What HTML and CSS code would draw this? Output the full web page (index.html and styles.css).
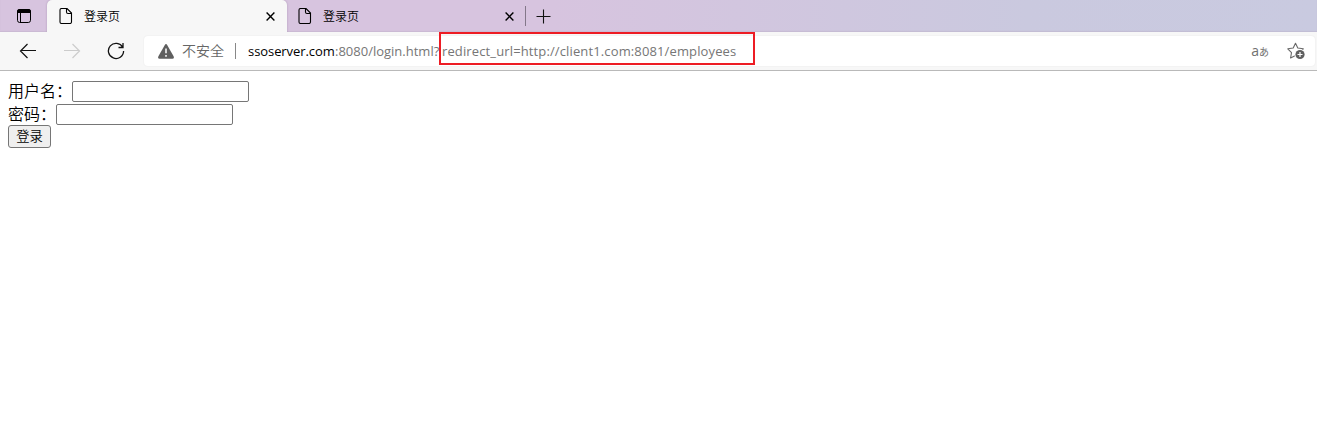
FILE: index.html
```html
<!DOCTYPE html>
<html lang="zh-CN">
<head>
<meta charset="utf-8">
<title>登录页</title>
<link rel="stylesheet" href="styles.css">
</head>
<body>
<header class="browser">
  <div class="tabstrip">
    <div class="tab-actions">
      <svg width="16" height="16" viewBox="0 0 16 16"><rect x="1.500" y="1.500" width="13" height="13" rx="2.200" fill="none" stroke="#000"/><path d="M1 5V3.500Q1 1 3.500 1H12.500Q15 1 15 3.500V5Z"/><path d="M4.500 5V14.500" stroke="#000"/></svg>
    </div>
    <div class="tab active">
      <svg class="page-icon" width="14" height="16" viewBox="0 0 14 16"><path d="M2.500.500H8L12.500 5V14Q12.500 15.500 11 15.500H2.500Q1 15.500 1 14V2Q1 .500 2.500.500ZM7.500.500V4Q7.500 5.500 9 5.500H12.500"/></svg>
      <span class="tab-title">登录页</span>
      <svg class="close" width="9" height="9" viewBox="0 0 9 9"><path d="M.6.6 8.400 8.400M8.400.6.6 8.400"/></svg>
    </div>
    <div class="tab">
      <svg class="page-icon" width="14" height="16" viewBox="0 0 14 16"><path d="M2.500.500H8L12.500 5V14Q12.500 15.500 11 15.500H2.500Q1 15.500 1 14V2Q1 .500 2.500.500ZM7.500.500V4Q7.500 5.500 9 5.500H12.500"/></svg>
      <span class="tab-title">登录页</span>
      <svg class="close" width="9" height="9" viewBox="0 0 9 9"><path d="M.6.6 8.400 8.400M8.400.6.6 8.400"/></svg>
    </div>
    <span class="tab-divider"></span>
    <svg class="new-tab" width="15" height="15" viewBox="0 0 15 15"><path d="M7.500.500V14.500M.500 7.500H14.500"/></svg>
  </div>
  <div class="toolbar">
    <svg class="nav" width="18" height="16" viewBox="0 0 18 16"><path d="M8.500 1 1.500 8 8.500 15M1.500 7.500H17"/></svg>
    <svg class="nav forward" width="18" height="16" viewBox="0 0 18 16"><path d="M9.500 1 16.500 8 9.500 15M16.500 7.500H1"/></svg>
    <svg class="nav reload" width="18" height="18" viewBox="0 0 18 18"><path d="M15.700 5.300A7.600 7.600 0 1 0 16.600 9M16 1V5.500H11.500"/></svg>
    <div class="address">
      <svg class="warn" width="16" height="15" viewBox="0 0 16 15"><path d="M6.800.9Q8-.7 9.200.9L15.700 12.500Q16.300 14.500 14.500 14.800H1.500Q-.3 14.500.3 12.500Z" fill="#5f5f5f"/><path d="M8 4.500V9.200M8 11V12.700" stroke="#fff" stroke-width="1.500"/></svg>
      <span class="insecure">不安全</span>
      <span class="address-divider"></span>
      <span class="url"><span class="host">ssoserver.com</span><span class="path">:8080/login.html?</span><span class="query">redirect_url=http://client1.com:8081/employees</span></span>
      <span class="translate"><span class="latin">a</span><span class="kana">あ</span></span>
      <svg class="favorite" width="18" height="18" viewBox="0 0 18 18"><path d="M8.500 1.200 10.800 6 16.300 6.800 12.400 10.600 13 15.500 8.500 13.500 3.600 16 4.500 10.600.8 6.800 6.200 6Z" fill="#fff" stroke="#686868" stroke-width="1.100" stroke-linejoin="round"/><circle cx="13" cy="12.500" r="5.500" fill="#fff"/><circle cx="13" cy="12.500" r="4.600" fill="#5f5f5f"/><path d="M13 10V15M10.500 12.500H15.500" stroke="#fff" stroke-width="1.200"/></svg>
    </div>
  </div>
  <div class="highlight"></div>
</header>
<form class="login">
  <label class="row"><span class="caption">用户名：</span><input type="text"></label>
  <label class="row"><span class="caption">密码：</span><input type="text"></label>
  <button type="button" class="submit">登录</button>
</form>
</body>
</html>
```
FILE: styles.css
```css
* { box-sizing: border-box; }
body { margin: 0; background: #fff; font-family: "Open Sans", "Noto Sans CJK SC", sans-serif; }
svg { display: block; flex: none; }
.browser { position: relative; height: 71px; background: #f7f7f7; border-bottom: 1px solid #b9b9b9; }
.tabstrip { display: flex; align-items: center; height: 32px; background: linear-gradient(90deg, #d7c4df 0, #d7c4df 42%, #cac9df 78%, #c9cae0 100%); box-shadow: inset 0 -1px 1px #b9abc466; }
.tab-actions { width: 47px; height: 32px; padding: 8px 0 0 16px; }
.tab { display: flex; align-items: center; width: 240px; height: 32px; padding: 0 12px; }
.tab:not(.active) { width: 238px; padding: 0 11px; }
.tab.active { background: #f7f7f7; border-radius: 5px 5px 0 0; box-shadow: 0 0 2px #7e688a80; clip-path: inset(0 -3px 0 -3px); }
.page-icon { fill: none; stroke: #000; stroke-width: 1.1; }
.tab-title { margin: 0 auto 0 11px; padding-bottom: 1px; font: 350 12px/17px "Noto Sans CJK SC", sans-serif; white-space: nowrap; }
.close { fill: none; stroke: #000; stroke-width: 1.4; }
.tab-divider { width: 1px; height: 20px; background: #837789; }
.new-tab { margin-left: 10px; stroke: #111; stroke-width: 1.1; }
.toolbar { display: flex; align-items: center; height: 38px; padding: 0 2px 0 19px; }
.nav { fill: none; stroke: #111; stroke-width: 1.2; margin-right: 26px; }
.nav.forward { stroke: #ccc; }
.nav.reload { margin-right: 19px; stroke-width: 1.3; }
.address { display: flex; align-items: center; flex: 1; height: 30px; padding: 0 10px 0 14px; background: #fff; border-radius: 4px; box-shadow: 0 0 2px #00000012; }
.insecure { margin-left: 8px; width: 43px; padding-bottom: 2px; color: #666; font: 350 14px/20px "Noto Sans CJK SC", sans-serif; white-space: nowrap; }
.address-divider { width: 1px; height: 16px; margin: 0 12px 0 10px; background: #888; }
.url { display: flex; color: #767676; font-size: 13px; line-height: 20px; white-space: nowrap; }
.host { width: 87px; color: #000; letter-spacing: -0.07px; }
.path { width: 107px; }
.query { letter-spacing: 0.13px; }
.translate { display: flex; align-items: baseline; margin-left: auto; color: #707070; line-height: 20px; }
.latin { font-size: 14px; }
.kana { font: 10px/20px "Noto Sans CJK JP", sans-serif; }
.favorite { margin-left: 18px; }
.highlight { position: absolute; left: 439px; top: 32px; width: 316px; height: 33px; border: 2px solid #ed1c24; }
.login { display: flex; flex-direction: column; align-items: flex-start; padding: 9px 8px; font: 350 16px/21px "Noto Sans CJK SC", sans-serif; }
.row { display: flex; align-items: center; height: 23px; white-space: nowrap; }
.caption { padding-bottom: 2px; }
.row input { width: 177px; height: 21px; margin: 0; padding: 1px 2px; border: 1px solid #767676; border-radius: 2px; background: #fff; }
.submit { width: 43px; height: 23px; margin: -1px 0 0; padding: 0 0 1px; border: 1px solid #767676; border-radius: 3px; background: #efefef; color: #000; font: 350 13.333px/20px "Noto Sans CJK SC", sans-serif; }
```
